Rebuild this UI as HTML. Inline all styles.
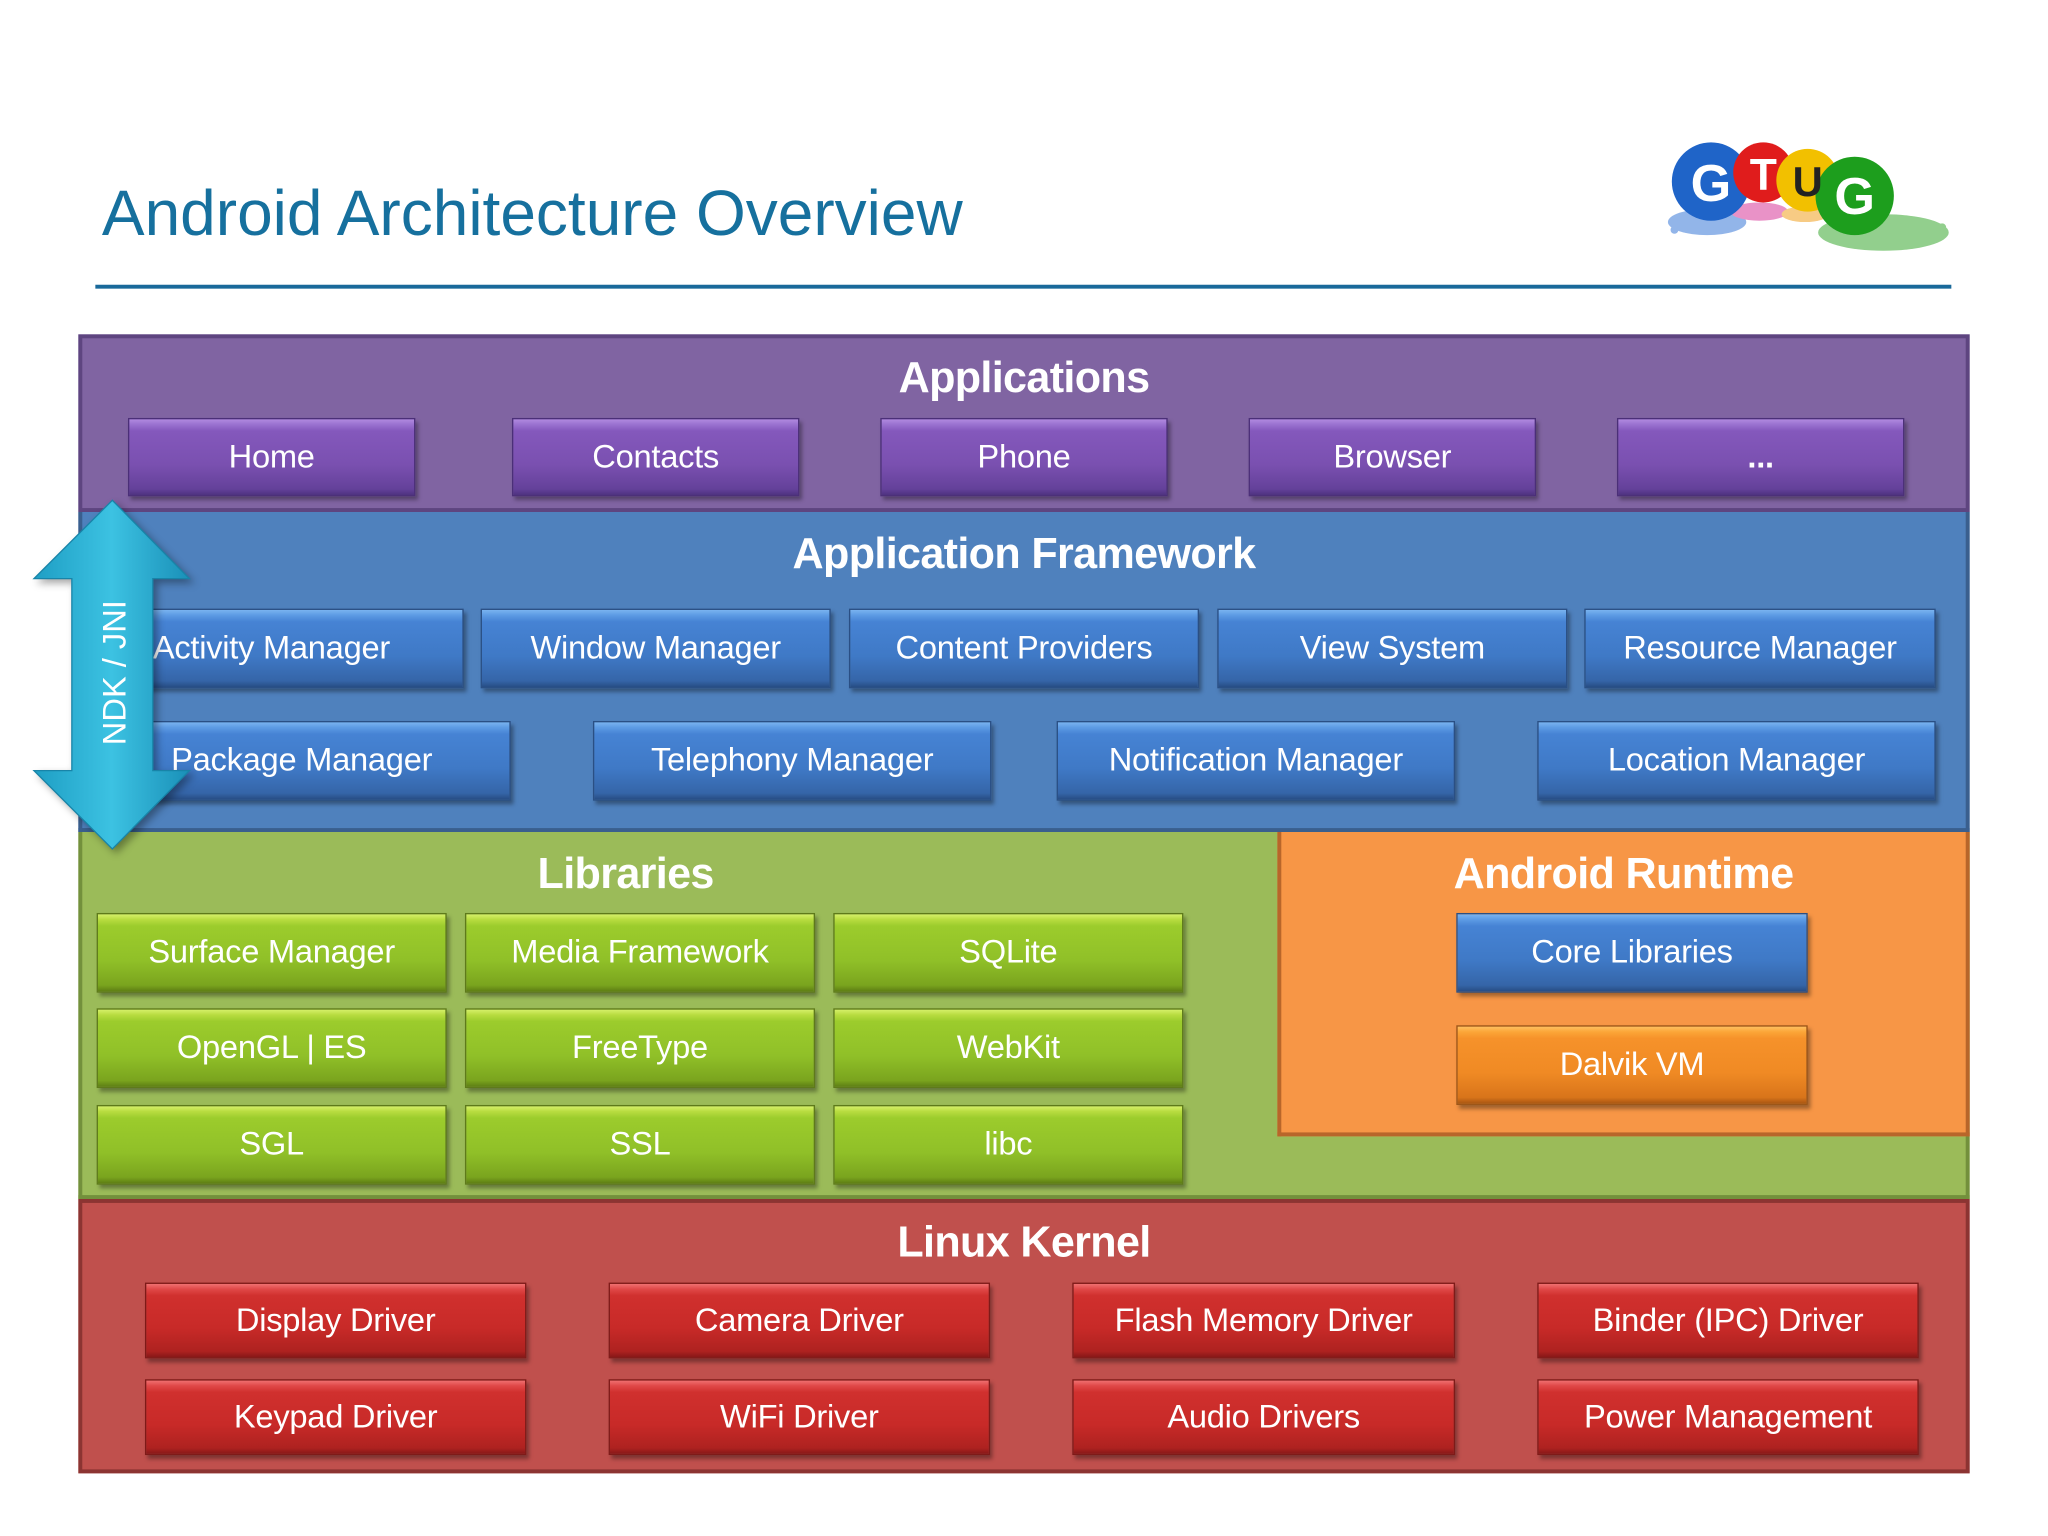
<!DOCTYPE html>
<html><head><meta charset="utf-8"><style>
html,body{margin:0;padding:0;background:#fff;}
body{width:2048px;height:1536px;overflow:hidden;position:relative;font-family:"Liberation Sans",sans-serif;}
#w{position:absolute;left:0;top:0;width:1568px;height:1176px;transform:scale(1.30612);transform-origin:0 0;}
.a{position:absolute;}
.t{position:absolute;color:#fff;font-weight:bold;font-size:33px;text-align:center;letter-spacing:-0.5px;}
.b{position:absolute;color:#fff;font-size:25px;display:flex;align-items:center;justify-content:center;box-sizing:border-box;white-space:nowrap;letter-spacing:-0.2px;box-shadow:2px 3px 3px rgba(0,0,0,.35);}
.p{background:linear-gradient(#b18ae0 0,#9a72d0 4px,#8458bc 9px,#7a50b0 60%,#64419a 92%,#4e3280 100%);border:1px solid #4b2f78;}
.bl{background:linear-gradient(#7ab4f0 0,#5d9be4 4px,#4683d4 9px,#3f79c6 60%,#3565a8 92%,#274d84 100%);border:1px solid #2a4f84;}
.g{background:linear-gradient(#d6f06a 0,#b8dc40 4px,#9ccc2c 9px,#90c028 60%,#7aa41e 92%,#5e7e14 100%);border:1px solid #5e7a1a;}
.o{background:linear-gradient(#ffc060 0,#fca638 4px,#f6922a 9px,#f08a24 60%,#d8741a 92%,#a85612 100%);border:1px solid #9a5518;}
.r{background:linear-gradient(#f07070 0,#e04848 4px,#d0302e 9px,#c82a28 60%,#ae2220 92%,#881818 100%);border:1px solid #7e1a18;}
</style></head><body><div id="w">
<div class="a" style="left:78px;top:136px;font-size:49px;color:#16709e;letter-spacing:0px;">Android Architecture Overview</div>
<div class="a" style="left:73px;top:218px;width:1421px;height:3px;background:#19699a;"></div>
<svg class="a" style="left:1262px;top:104px" width="240" height="112" viewBox="0 0 240 112">
<g opacity=".55"><ellipse cx="45" cy="66" rx="30" ry="10" fill="#3a78d8"/><ellipse cx="85" cy="58" rx="22" ry="7" fill="#d83a9a"/><ellipse cx="120" cy="60" rx="18" ry="6" fill="#f0a020"/><ellipse cx="180" cy="74" rx="50" ry="14" fill="#3aa830"/><circle cx="20" cy="72" r="3" fill="#3a78d8"/><circle cx="225" cy="70" r="3" fill="#3aa830"/></g>
<circle cx="48" cy="35" r="30" fill="#1f64c8"/><circle cx="88" cy="28" r="23" fill="#e01c1c"/><circle cx="122" cy="34" r="24" fill="#f2c000"/><circle cx="158" cy="46" r="30" fill="#1d9e1d"/>
<text x="48" y="50" font-size="40" font-weight="bold" fill="#fff" text-anchor="middle" font-family="Liberation Sans">G</text>
<text x="88" y="41" font-size="34" font-weight="bold" fill="#fff" text-anchor="middle" font-family="Liberation Sans">T</text>
<text x="122" y="46" font-size="32" font-weight="bold" fill="#222" text-anchor="middle" font-family="Liberation Sans">U</text>
<text x="158" y="60" font-size="40" font-weight="bold" fill="#fff" text-anchor="middle" font-family="Liberation Sans">G</text>
</svg>
<div class="a" style="left:60px;top:256px;width:1448px;height:136px;background:#8064a2;border:3px solid #5e4580;box-sizing:border-box;"></div>
<div class="a" style="left:60px;top:392px;width:1448px;height:245px;background:#4f81bd;border:3px solid #3a5f8e;border-top:none;box-sizing:border-box;"></div>
<div class="a" style="left:60px;top:637px;width:1448px;height:281px;background:#9bbb59;border:3px solid #73903c;border-top:none;box-sizing:border-box;"></div>
<div class="a" style="left:978px;top:637px;width:530px;height:233px;background:#f79646;border:3px solid #b8662a;border-top:none;box-sizing:border-box;"></div>
<div class="a" style="left:60px;top:918px;width:1448px;height:210px;background:#c0504d;border:3px solid #8c3432;box-sizing:border-box;"></div>
<div class="t" style="left:60px;width:1448px;top:270px;">Applications</div>
<div class="t" style="left:60px;width:1448px;top:405px;">Application Framework</div>
<div class="t" style="left:60px;width:838px;top:650px;">Libraries</div>
<div class="t" style="left:978px;width:530px;top:650px;">Android Runtime</div>
<div class="t" style="left:60px;width:1448px;top:932px;">Linux Kernel</div>

<div class="b p" style="left:98px;top:320px;width:220px;height:60px;">Home</div>
<div class="b p" style="left:392px;top:320px;width:220px;height:60px;">Contacts</div>
<div class="b p" style="left:674px;top:320px;width:220px;height:60px;">Phone</div>
<div class="b p" style="left:956px;top:320px;width:220px;height:60px;">Browser</div>
<div class="b p" style="left:1238px;top:320px;width:220px;height:60px;font-weight:bold;">...</div>

<div class="b bl" style="left:100px;top:466px;width:255px;height:61px;justify-content:flex-start;padding-left:16px;">Activity Manager</div>
<div class="b bl" style="left:368px;top:466px;width:268px;height:61px;">Window Manager</div>
<div class="b bl" style="left:650px;top:466px;width:268px;height:61px;">Content Providers</div>
<div class="b bl" style="left:932px;top:466px;width:268px;height:61px;">View System</div>
<div class="b bl" style="left:1213px;top:466px;width:269px;height:61px;">Resource Manager</div>
<div class="b bl" style="left:100px;top:552px;width:291px;height:61px;justify-content:flex-start;padding-left:30px;">Package Manager</div>
<div class="b bl" style="left:454px;top:552px;width:305px;height:61px;">Telephony Manager</div>
<div class="b bl" style="left:809px;top:552px;width:305px;height:61px;">Notification Manager</div>
<div class="b bl" style="left:1177px;top:552px;width:305px;height:61px;">Location Manager</div>

<div class="b g" style="left:74px;top:699px;width:268px;height:61px;">Surface Manager</div>
<div class="b g" style="left:356px;top:699px;width:268px;height:61px;">Media Framework</div>
<div class="b g" style="left:638px;top:699px;width:268px;height:61px;">SQLite</div>
<div class="b g" style="left:74px;top:772px;width:268px;height:61px;">OpenGL | ES</div>
<div class="b g" style="left:356px;top:772px;width:268px;height:61px;">FreeType</div>
<div class="b g" style="left:638px;top:772px;width:268px;height:61px;">WebKit</div>
<div class="b g" style="left:74px;top:846px;width:268px;height:61px;">SGL</div>
<div class="b g" style="left:356px;top:846px;width:268px;height:61px;">SSL</div>
<div class="b g" style="left:638px;top:846px;width:268px;height:61px;">libc</div>

<div class="b bl" style="left:1115px;top:699px;width:269px;height:61px;">Core Libraries</div>
<div class="b o" style="left:1115px;top:785px;width:269px;height:61px;">Dalvik VM</div>

<div class="b r" style="left:111px;top:982px;width:292px;height:58px;">Display Driver</div>
<div class="b r" style="left:466px;top:982px;width:292px;height:58px;">Camera Driver</div>
<div class="b r" style="left:821px;top:982px;width:293px;height:58px;">Flash Memory Driver</div>
<div class="b r" style="left:1177px;top:982px;width:292px;height:58px;">Binder (IPC) Driver</div>
<div class="b r" style="left:111px;top:1056px;width:292px;height:58px;">Keypad Driver</div>
<div class="b r" style="left:466px;top:1056px;width:292px;height:58px;">WiFi Driver</div>
<div class="b r" style="left:821px;top:1056px;width:293px;height:58px;">Audio Drivers</div>
<div class="b r" style="left:1177px;top:1056px;width:292px;height:58px;">Power Management</div>

<svg class="a" style="left:22px;top:380px;overflow:visible" width="130" height="275" viewBox="0 0 130 275">
<defs><linearGradient id="ag" x1="0" x2="1"><stop offset="0" stop-color="#1e9ec4"/><stop offset=".5" stop-color="#3cc2e2"/><stop offset="1" stop-color="#1a90b8"/></linearGradient></defs>
<path d="M64 3 L123 63 L95 63 L95 210 L123 210 L64 270 L4 210 L33 210 L33 63 L4 63 Z" fill="url(#ag)" stroke="#1884a8" stroke-width="1" style="filter:drop-shadow(3px 3px 3px rgba(0,0,0,.35))"/>
<text x="0" y="0" transform="translate(74,135) rotate(-90)" font-size="25" fill="#fff" text-anchor="middle" font-family="Liberation Sans">NDK / JNI</text>
</svg>
</div></body></html>
